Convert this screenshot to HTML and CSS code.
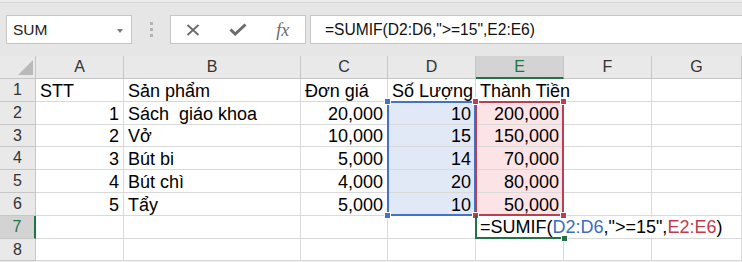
FILE: index.html
```html
<!DOCTYPE html>
<html>
<head>
  <title>SUMIF</title>
  <link rel="stylesheet" href="styles.css">
</head>
<body>
  <div class="app">
    <div class="toolbar">
      <div class="namebox">
        <span>SUM</span>
        <span class="caret"></span>
      </div>
      <div class="grip"><i></i><i></i><i></i></div>
      <div class="fbuttons">
        <span class="slot">
          <svg width="14" height="12" viewBox="0 0 14 12"><path d="M1.5 1 L12.5 11 M12.5 1 L1.5 11" stroke="#6b6b6b" stroke-width="1.8" fill="none"/></svg>
        </span>
        <span class="slot">
          <svg width="18" height="13" viewBox="0 0 18 13"><path d="M1.5 6.5 L6.2 11 L16.5 1.5" stroke="#6b6b6b" stroke-width="3" fill="none"/></svg>
        </span>
        <span class="slot fx">fx</span>
      </div>
      <div class="formula">=SUMIF(D2:D6,"&gt;=15",E2:E6)</div>
    </div>

    <div class="sheet">
      <!-- header row -->
      <div class="h corner">
        <svg width="15" height="15" viewBox="0 0 15 15"><polygon points="15,0 15,15 0,15" fill="#b9b9b9"/></svg>
      </div>
      <div class="h">A</div>
      <div class="h">B</div>
      <div class="h">C</div>
      <div class="h">D</div>
      <div class="h on-col">E</div>
      <div class="h">F</div>
      <div class="h">G</div>

      <!-- row 1 -->
      <div class="h rh">1</div>
      <div class="c">STT</div>
      <div class="c">Sản phẩm</div>
      <div class="c">Đơn giá</div>
      <div class="c">Số Lượng</div>
      <div class="c spill">Thành Tiền</div>
      <div class="c"></div>
      <div class="c"></div>

      <!-- row 2 -->
      <div class="h rh">2</div>
      <div class="c n">1</div>
      <div class="c">Sách  giáo khoa</div>
      <div class="c n">20,000</div>
      <div class="c n fill-d">10</div>
      <div class="c n fill-e">200,000</div>
      <div class="c"></div>
      <div class="c"></div>

      <!-- row 3 -->
      <div class="h rh">3</div>
      <div class="c n">2</div>
      <div class="c">Vở</div>
      <div class="c n">10,000</div>
      <div class="c n fill-d">15</div>
      <div class="c n fill-e">150,000</div>
      <div class="c"></div>
      <div class="c"></div>

      <!-- row 4 -->
      <div class="h rh">4</div>
      <div class="c n">3</div>
      <div class="c">Bút bi</div>
      <div class="c n">5,000</div>
      <div class="c n fill-d">14</div>
      <div class="c n fill-e">70,000</div>
      <div class="c"></div>
      <div class="c"></div>

      <!-- row 5 -->
      <div class="h rh">5</div>
      <div class="c n">4</div>
      <div class="c">Bút chì</div>
      <div class="c n">4,000</div>
      <div class="c n fill-d">20</div>
      <div class="c n fill-e">80,000</div>
      <div class="c"></div>
      <div class="c"></div>

      <!-- row 6 -->
      <div class="h rh">6</div>
      <div class="c n">5</div>
      <div class="c">Tẩy</div>
      <div class="c n">5,000</div>
      <div class="c n fill-d">10</div>
      <div class="c n fill-e">50,000</div>
      <div class="c"></div>
      <div class="c"></div>

      <!-- row 7 -->
      <div class="h rh on-row">7</div>
      <div class="c"></div>
      <div class="c"></div>
      <div class="c"></div>
      <div class="c"></div>
      <div class="c editing"><span class="editor">=SUMIF(<span class="ref-d">D2:D6</span>,"&gt;=15",<span class="ref-e">E2:E6</span>)</span></div>
      <div class="c"></div>
      <div class="c"></div>

      <!-- row 8 -->
      <div class="h rh">8</div>
      <div class="c"></div>
      <div class="c"></div>
      <div class="c"></div>
      <div class="c"></div>
      <div class="c"></div>
      <div class="c"></div>
      <div class="c"></div>

      <!-- range marks drawn over the cells -->
      <div class="marks">
        <div class="range range-d">
          <i class="dot tl"></i><i class="dot tr"></i><i class="dot bl"></i><i class="dot br"></i>
        </div>
        <div class="range range-e">
          <i class="dot tl"></i><i class="dot tr"></i><i class="dot bl"></i><i class="dot br"></i>
        </div>
        <div class="cursor"><i class="dot br"></i></div>
      </div>
    </div>
  </div>
</body>
</html>
```

FILE: styles.css
```css
html, body {
  margin: 0;
  padding: 0;
  overflow: hidden;
}

body {
  font-family: "Liberation Sans", Arial, sans-serif;
  background-color: #ffffff;
  color: #000;
}

.app {
  width: 742px;
  height: 262px;
  padding-top: 2px;
  background-color: #ececec;
  box-sizing: border-box;
}

/* formula bar */

.toolbar {
  height: 54px;
  border-top: 1px solid #d5d5d5;
  background-color: #e6e6e6;
  box-sizing: border-box;
  padding: 12px 0 0 6px;
  display: flex;
  align-items: flex-start;
}

.namebox {
  width: 126px;
  height: 29px;
  box-sizing: border-box;
  background-color: #fff;
  border: 1px solid #c6c6c6;
  padding: 0 8px 0 6px;
  display: flex;
  align-items: center;
  justify-content: space-between;
  font-size: 15.5px;
  color: #222;
}

.namebox .caret {
  width: 0;
  height: 0;
  border-left: 3.5px solid transparent;
  border-right: 3.5px solid transparent;
  border-top: 4px solid #7a7a7a;
  margin-top: 2px;
}

.grip {
  width: 38px;
  height: 29px;
  display: flex;
  flex-direction: column;
  align-items: center;
  justify-content: center;
  gap: 3px;
}

.grip i {
  display: block;
  width: 3px;
  height: 3px;
  background-color: #b3b3b3;
}

.fbuttons {
  width: 136px;
  height: 29px;
  box-sizing: border-box;
  background-color: #fff;
  border: 1px solid #c6c6c6;
  display: flex;
  align-items: center;
}

.fbuttons .slot {
  width: 45px;
  height: 27px;
  display: flex;
  align-items: center;
  justify-content: center;
}

.fbuttons .fx {
  font-family: "Liberation Serif", "Times New Roman", serif;
  font-style: italic;
  font-size: 18px;
  color: #6b6b6b;
  padding-top: 1px;
}

.formula {
  flex: 1;
  height: 29px;
  box-sizing: border-box;
  margin-left: 4px;
  background-color: #fff;
  border: 1px solid #c6c6c6;
  border-right: none;
  padding-left: 14px;
  display: flex;
  align-items: center;
  font-size: 15.6px;
  color: #111;
  white-space: pre;
}

/* sheet grid */

.sheet {
  position: relative;
  display: grid;
  grid-template-columns: 36px 88px 177px 87px 88px 88px 88px 1fr;
  grid-template-rows: 23px 23px 23px 22px 23px 23px 23px 23px 22px;
  background-color: #fff;
}

.h {
  background-color: #e9e9e9;
  border-right: 1px solid #c6c6c6;
  border-bottom: 1px solid #c6c6c6;
  box-sizing: border-box;
  display: flex;
  align-items: center;
  justify-content: center;
  font-size: 16px;
  color: #333;
}

.corner {
  align-items: flex-end;
  justify-content: flex-end;
  padding: 0 2px 3px 0;
}

.corner svg {
  display: block;
}

.h.on-col {
  background-color: #d3d3d3;
  border-bottom: 2px solid #217346;
  color: #217346;
}

.h.on-row {
  background-color: #d3d3d3;
  border-right: 2px solid #217346;
  color: #217346;
}

.c {
  border-right: 1px solid #d9d9d9;
  border-bottom: 1px solid #d9d9d9;
  box-sizing: border-box;
  padding: 0 4px;
  display: flex;
  align-items: flex-end;
  font-size: 18px;
  line-height: 20px;
  white-space: pre;
  min-width: 0;
}

.c.n {
  justify-content: flex-end;
}

.c.spill {
  border-right-color: transparent;
}

.fill-d {
  background-color: rgba(68, 114, 196, 0.16);
}

.fill-e {
  background-color: rgba(235, 90, 100, 0.16);
}

.c.editing {
  position: relative;
  z-index: 1;
  border-right-color: transparent;
}

.editor {
  background-color: #fff;
  padding-right: 4px;
  margin-bottom: 1px;
}

.ref-d {
  color: #3b6cc0;
}

.ref-e {
  color: #bf3b4b;
}

/* selection marks on top of the cells */

.marks {
  position: absolute;
  top: 0;
  left: 0;
  right: 0;
  bottom: 0;
  z-index: 2;
  display: grid;
  grid-template-columns: 36px 88px 177px 87px 88px 88px 88px 1fr;
  grid-template-rows: 23px 23px 23px 22px 23px 23px 23px 23px 22px;
  pointer-events: none;
}

.range {
  position: relative;
  grid-row: 3 / 8;
  margin: -1px 0 0 -1px;
  border: 2px solid;
  box-sizing: border-box;
}

.range-d {
  grid-column: 5 / 6;
  border-color: #4472c4;
}

.range-e {
  grid-column: 6 / 7;
  border-color: #b8404f;
}

.cursor {
  position: relative;
  grid-column: 6 / 7;
  grid-row: 8 / 9;
  margin: -1px 0 0 -1px;
  border-left: 2px solid #217346;
  border-bottom: 2px solid #217346;
  box-sizing: border-box;
}

.dot {
  position: absolute;
  width: 5px;
  height: 5px;
  border: 1px solid #fff;
}

.range-d .dot {
  background-color: #4472c4;
}

.range-e .dot {
  background-color: #b8404f;
}

.cursor .dot {
  background-color: #217346;
}

.dot.tl { left: -5px; top: -5px; }
.dot.tr { right: -5px; top: -5px; }
.dot.bl { left: -5px; bottom: -5px; }
.dot.br { right: -5px; bottom: -5px; }

.cursor .dot.br {
  right: -4px;
  bottom: -5px;
}
```
